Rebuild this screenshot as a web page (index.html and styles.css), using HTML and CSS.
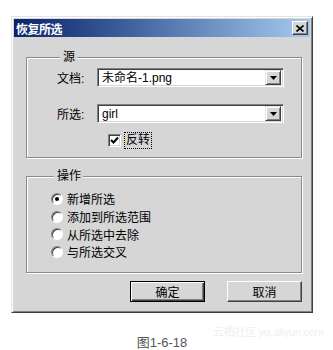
FILE: index.html
```html
<!DOCTYPE html>
<html lang="zh">
<head>
<meta charset="utf-8">
<title>恢复所选</title>
<link rel="stylesheet" href="styles.css">
</head>
<body>
<div class="page">
  <div class="dialog">
    <div class="titlebar">
      <span class="title">恢复所选</span>
      <span class="close"><svg width="8" height="7" viewBox="0 0 8 7"><path d="M0.5 0.5 L7.5 6.5 M7.5 0.5 L0.5 6.5" stroke="#000" stroke-width="1.6"/></svg></span>
    </div>
    <div class="content">
      <fieldset class="group group-src">
        <legend>源</legend>
        <div class="row">
          <span class="lbl">文档:</span>
          <div class="select"><span class="val">未命名-1.png</span><span class="arrow"><svg width="7" height="4" viewBox="0 0 7 4"><path d="M0 0 H7 L3.5 4 Z" fill="#000"/></svg></span></div>
        </div>
        <div class="row">
          <span class="lbl">所选:</span>
          <div class="select"><span class="val">girl</span><span class="arrow"><svg width="7" height="4" viewBox="0 0 7 4"><path d="M0 0 H7 L3.5 4 Z" fill="#000"/></svg></span></div>
        </div>
        <div class="check-row">
          <span class="checkbox"><svg width="9" height="9" viewBox="0 0 9 9"><path d="M1 4 L3.5 6.5 L8 1.5" stroke="#000" stroke-width="2" fill="none"/></svg></span>
          <span class="check-lbl">反转</span>
        </div>
      </fieldset>
      <fieldset class="group group-op">
        <legend>操作</legend>
        <div class="radio-row"><span class="radio on"></span><span>新增所选</span></div>
        <div class="radio-row"><span class="radio"></span><span>添加到所选范围</span></div>
        <div class="radio-row"><span class="radio"></span><span>从所选中去除</span></div>
        <div class="radio-row"><span class="radio"></span><span>与所选交叉</span></div>
      </fieldset>
      <div class="buttons">
        <span class="btn default"><span>确定</span></span>
        <span class="btn"><span>取消</span></span>
      </div>
    </div>
  </div>
  <div class="caption">图1-6-18</div>
  <div class="watermark">云栖社区 yq.aliyun.com</div>
</div>
</body>
</html>
```
FILE: styles.css
```css
html, body {
  margin: 0;
  padding: 0;
  background: #fff;
}
body {
  font-family: "Liberation Sans", "Noto Sans CJK SC", sans-serif;
  font-size: 12px;
  color: #000;
}
.page {
  position: relative;
  width: 333px;
  height: 350px;
  padding: 16px 0 0 11px;
  box-sizing: border-box;
}
.dialog {
  width: 302px;
  height: 297px;
  box-sizing: border-box;
  background: #d6d6d6;
  border: 1px solid;
  border-color: #e4e4e4 #404040 #404040 #e4e4e4;
  box-shadow: inset 1px 1px 0 #fff, inset -1px -1px 0 #808080;
  padding: 2px;
}
.titlebar {
  height: 18px;
  background: linear-gradient(to right, #0a246a 0%, #3a5a98 35%, #a6caf0 100%);
  display: flex;
  align-items: center;
  justify-content: space-between;
  padding: 0 2px 0 2px;
}
.title {
  color: #fff;
  font-weight: bold;
  font-size: 12px;
  letter-spacing: -0.5px;
}
.close {
  width: 16px;
  height: 14px;
  box-sizing: border-box;
  background: #d6d6d6;
  border: 1px solid;
  border-color: #fff #404040 #404040 #fff;
  box-shadow: inset -1px -1px 0 #808080;
  display: flex;
  align-items: center;
  justify-content: center;
}
.content {
  padding: 13px 0 0 12px;
}
.group {
  margin: 0;
  width: 276px;
  box-sizing: border-box;
  border: 1px solid #8a8a8a;
  box-shadow: 1px 1px 0 #fff, inset 1px 1px 0 #fff;
  min-width: 0;
}
.group legend {
  padding: 0 2px 0 3px;
  margin-left: 3px;
  background: #d6d6d6;
  line-height: 14px;
}
.group-src {
  padding: 4px 0 9px 30px;
}
.row {
  display: flex;
  align-items: center;
  height: 19px;
  margin-bottom: 17px;
}
.row + .row {
  margin-bottom: 10px;
}
.lbl {
  width: 40px;
}
.select {
  width: 187px;
  height: 19px;
  box-sizing: border-box;
  background: #fff;
  border: 1px solid;
  border-color: #808080 #fff #fff #808080;
  box-shadow: inset 1px 1px 0 #404040, inset -1px -1px 0 #d6d6d6;
  display: flex;
  align-items: center;
  padding: 2px;
}
.val {
  flex: 1;
  padding-left: 2px;
  line-height: 14px;
}
.arrow {
  width: 16px;
  height: 15px;
  box-sizing: border-box;
  background: #d6d6d6;
  border: 1px solid;
  border-color: #e4e4e4 #404040 #404040 #e4e4e4;
  box-shadow: inset 1px 1px 0 #fff, inset -1px -1px 0 #808080;
  display: flex;
  align-items: center;
  justify-content: center;
}
.check-row {
  display: flex;
  align-items: center;
  margin-left: 51px;
  height: 15px;
}
.checkbox {
  width: 13px;
  height: 13px;
  box-sizing: border-box;
  background: #fff;
  border: 1px solid;
  border-color: #808080 #fff #fff #808080;
  box-shadow: inset 1px 1px 0 #404040, inset -1px -1px 0 #d6d6d6;
  display: flex;
  align-items: center;
  justify-content: center;
}
.check-lbl {
  margin-left: 4px;
  padding: 0 1px;
  outline: 1px dotted #000;
  outline-offset: 0;
  line-height: 15px;
}
.group-op {
  margin-top: 11px;
  padding: 7px 0 11px 24px;
}
.radio-row {
  display: flex;
  align-items: center;
  height: 17.7px;
}
.radio {
  width: 12px;
  height: 12px;
  box-sizing: border-box;
  border-radius: 50%;
  background: #fff;
  border: 1px solid;
  border-color: #808080 #fff #fff #808080;
  box-shadow: inset 1px 1px 0 #404040;
  margin-right: 4px;
  display: flex;
  align-items: center;
  justify-content: center;
}
.radio.on::after {
  content: "";
  width: 4px;
  height: 4px;
  border-radius: 50%;
  background: #000;
}
.buttons {
  display: flex;
  justify-content: flex-end;
  gap: 22px;
  width: 276px;
  margin-top: 8px;
}
.btn {
  width: 75px;
  height: 21px;
  box-sizing: border-box;
  background: #d6d6d6;
  border: 1px solid;
  border-color: #fff #404040 #404040 #fff;
  box-shadow: inset -1px -1px 0 #808080;
  display: flex;
  align-items: center;
  justify-content: center;
}
.btn.default {
  border: 1px solid #000;
  box-shadow: inset 1px 1px 0 #fff, inset -1px -1px 0 #404040, inset -2px -2px 0 #808080;
}
.caption {
  width: 302px;
  text-align: center;
  margin-top: 19px;
  font-size: 13px;
  color: #555;
}
.watermark {
  position: absolute;
  left: 213px;
  top: 323px;
  font-size: 11px;
  letter-spacing: -0.2px;
  white-space: nowrap;
  color: #efefef;
}
```
